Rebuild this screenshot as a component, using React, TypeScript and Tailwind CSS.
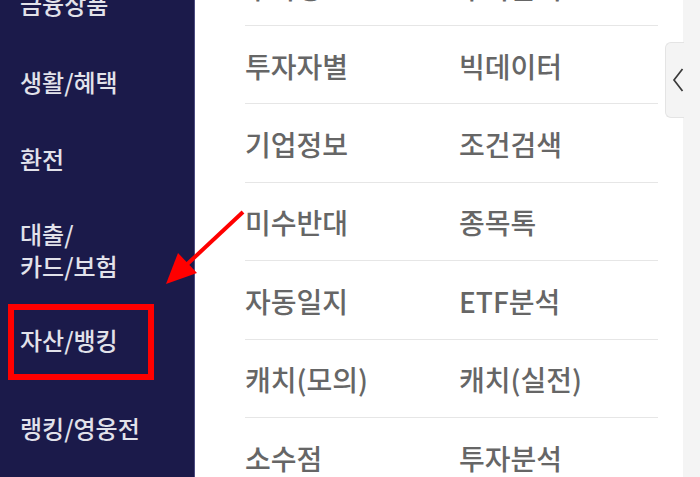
const sideMenus = [
  { label: ['금융상품'], h: 'h-[78px]' },
  { label: ['생활/혜택'], h: 'h-[77px]' },
  { label: ['환전'], h: 'h-[77px]' },
  { label: ['대출/', '카드/보험'], h: 'h-[106px]' },
  { label: ['자산/뱅킹'], h: 'h-[73px]', marked: true },
  { label: ['랭킹/영웅전'], h: 'h-[104px]' },
]

const rows = [
  ['투자정보', '투자분석'],
  ['투자자별', '빅데이터'],
  ['기업정보', '조건검색'],
  ['미수반대', '종목톡'],
  ['자동일지', 'ETF분석'],
  ['캐치(모의)', '캐치(실전)'],
  ['소수점', '투자분석'],
]

export default function App() {
  return (
    <div
      className="relative flex h-[477px] w-[700px] overflow-hidden bg-white"
      style={{ fontFamily: '"Noto Sans CJK KR", "Noto Sans", sans-serif' }}
    >
      {/* Sidebar */}
      <div className="w-[195px] shrink-0 border-r border-[#4d4c80] bg-[#1b1a4a]">
        <div className="-mt-[35px]">
          {sideMenus.map((m) => (
            <div key={m.label.join()} className={`relative flex items-center pl-5 ${m.h}`}>
              <div className="text-[24px] font-medium leading-[32px] text-[#e2e2ea]">
                {m.label.map((l) => (
                  <div key={l}>{l}</div>
                ))}
              </div>
              {m.marked && (
                <div className="absolute left-2 top-[1px] h-[76px] w-[146px] border-[6px] border-[#ff0000]" />
              )}
            </div>
          ))}
        </div>
      </div>

      {/* Menu grid */}
      <div className="flex-1 pl-[50px] pr-[25px]">
        <div className="-mt-[52.4px]">
          {rows.map(([a, b], i) => (
            <div
              key={i}
              className="flex h-[78.4px] items-center border-b border-[#e6e6e6] pt-[2px] text-[28px] font-medium text-[#666666]"
            >
              <span className="w-[214px]">{a}</span>
              <span>{b}</span>
            </div>
          ))}
        </div>
      </div>

      {/* Right strip with tab */}
      <div className="w-[17px] shrink-0 bg-[#f4f4f4]" />
      <div className="absolute left-[665px] top-[42px] flex h-[76px] w-[19px] items-center justify-end rounded-bl-md rounded-tl-md border-y border-l border-[#e4e4e4] bg-[#f4f4f4]">
        <svg width="12" height="24" viewBox="0 0 12 24" fill="none">
          <polyline points="10.5,1 2,12 10.5,23" stroke="#3a3a3a" strokeWidth="1.7" />
        </svg>
      </div>

      {/* Red arrow annotation */}
      <svg className="absolute left-0 top-0" width="700" height="477" viewBox="0 0 700 477">
        <line x1="243" y1="212" x2="182" y2="269" stroke="#ff0000" strokeWidth="4" />
        <polygon points="166,284 178,253 197,273" fill="#ff0000" />
      </svg>
    </div>
  )
}
